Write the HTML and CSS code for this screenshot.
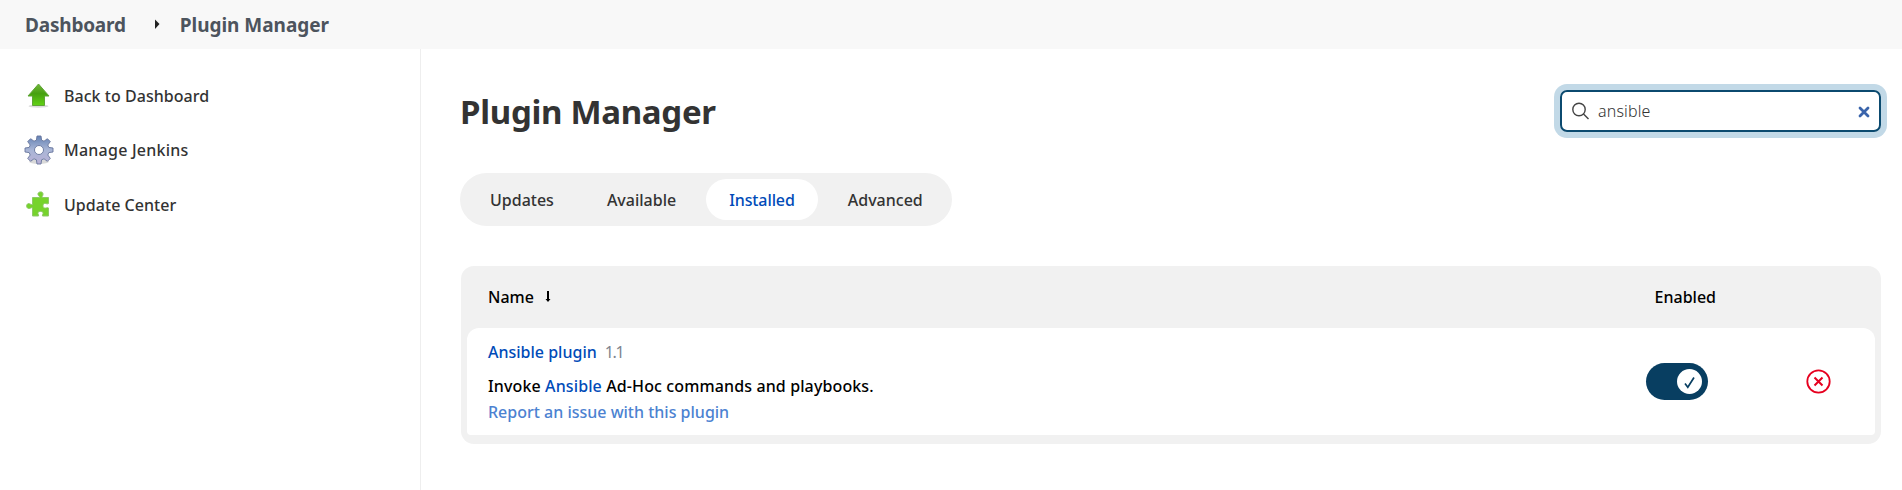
FILE: index.html
```html
<!DOCTYPE html>
<html lang="en">
<head>
<meta charset="utf-8">
<title>Plugin Manager</title>
<link rel="stylesheet" href="styles.css">
</head>
<body>
<nav class="breadcrumbs">
  <a class="crumb">Dashboard</a>
  <svg class="crumb-arrow" width="5" height="11" viewBox="0 0 5 11"><path d="M0 0.5L4.500 5L0 10Z" fill="#222"/></svg>
  <a class="crumb crumb-page">Plugin Manager</a>
</nav>
<div class="page">
  <aside class="side">
    <a class="task">
      <svg class="task-icon" viewBox="0 0 30 30">
        <defs><linearGradient id="up" x1="0" y1="0" x2="0" y2="1"><stop offset="0" stop-color="#74b63c"/><stop offset=".45" stop-color="#46a010"/><stop offset="1" stop-color="#62d215"/></linearGradient></defs>
        <ellipse cx="14.500" cy="25.200" rx="10" ry="1.600" fill="#000" opacity=".14"/>
        <path d="M14.500 3L25 15H20.500V24.500H8.500V15H4Z" fill="url(#up)" stroke="#5fa536" stroke-width="1" stroke-linejoin="round"/>
      </svg>
      <span>Back to Dashboard</span>
    </a>
    <a class="task task-manage">
      <svg class="task-icon" viewBox="0 0 30 30">
        <defs><linearGradient id="gear" x1="0" y1="0" x2="0" y2="1"><stop offset="0" stop-color="#6482b4"/><stop offset=".5" stop-color="#a9b6d6"/><stop offset="1" stop-color="#b9b0d6"/></linearGradient></defs>
        <ellipse cx="15" cy="26.500" rx="10" ry="2.400" fill="#000" opacity=".15"/>
        <path fill="url(#gear)" stroke="#66759c" stroke-width=".9" stroke-linejoin="round" fill-rule="evenodd" d="M13 1h4l.6 4.200 2.400 1L23.400 3.700 26.300 6.600 23.800 10l1 2.400L29 13v4l-4.200.6-1 2.400 2.500 3.400-2.900 2.900L20 23.800l-2.400 1L17 29h-4l-.6-4.200-2.400-1-3.400 2.500-2.900-2.900L6.200 20l-1-2.400L1 17v-4l4.200-.6 1-2.400-2.500-3.400 2.900-2.900L10 6.200l2.400-1ZM15 10.500a4.500 4.500 0 1 0 0 9a4.500 4.500 0 1 0 0-9Z"/>
      </svg>
      <span>Manage Jenkins</span>
    </a>
    <a class="task">
      <svg class="task-icon" viewBox="0 0 30 30">
        <path fill="#76d32c" stroke="#8ec968" stroke-width="1" d="M8.500 7.500H15.500C16 6 13.500 5.500 14 3.500C14.500 1.500 19 1 19 4C19 6 18 6 18 7.500H24.500V13.500C23 14.500 22 13 20.500 13.500C18.500 14 18.500 17.500 20.500 18C22 18.500 23 17 24.500 18V26H18.500C18 24.500 19.500 24 19 22.500C18.500 21 14.500 21 14 22.500C13.500 24 15 24.500 14.500 26H8.500V18C7 17 6 19 4.500 18.500C2 18 2 14 4.500 13.500C6 13.500 7 15 8.500 14.500Z"/>
      </svg>
      <span>Update Center</span>
    </a>
  </aside>
  <main class="main">
    <header class="head">
      <h1 class="title">Plugin Manager</h1>
      <div class="search">
        <svg class="search-icon" width="17" height="18" viewBox="0 0 17 18" fill="none" stroke="#444" stroke-width="1.400"><circle cx="7" cy="7.500" r="6.200"/><path d="M11.500 12L16.500 17"/></svg>
        <span class="query">ansible</span>
        <svg class="clear" width="12" height="12" viewBox="0 0 12 12"><path d="M2 2L10 10M10 2L2 10" stroke="#3a64ab" stroke-width="2.800" stroke-linecap="round"/></svg>
      </div>
    </header>
    <div class="tabs">
      <a class="tab">Updates</a><a class="tab">Available</a><a class="tab tab-on">Installed</a><a class="tab">Advanced</a>
    </div>
    <section class="table">
      <div class="thead">
        <span>Name</span>
        <svg class="sort" width="6" height="12" viewBox="0 0 6 12"><path d="M2 0H4V8H5.500L3 11L.5 8H2Z" fill="#000"/></svg>
        <span class="th-enabled">Enabled</span>
      </div>
      <div class="row">
        <div class="info">
          <div class="name"><a class="link">Ansible plugin</a><span class="version">1.1</span></div>
          <div class="desc">Invoke <a class="link">Ansible</a> Ad-Hoc commands and playbooks.</div>
          <a class="report">Report an issue with this plugin</a>
        </div>
        <div class="toggle"><span class="knob"><svg class="check" width="11" height="13" viewBox="0 0 11 13"><path d="M1 7.500L3.800 11.200L10 1.500" fill="none" stroke="#083e61" stroke-width="1.700"/></svg></span></div>
        <svg class="remove" width="25" height="25" viewBox="0 0 25 25" fill="none" stroke="#e6001f"><circle cx="12.500" cy="12.500" r="11.200" stroke-width="1.800"/><path d="M8.500 8.500L16.500 16.500M16.500 8.500L8.500 16.500" stroke-width="2"/></svg>
      </div>
    </section>
  </main>
</div>
</body>
</html>
```
FILE: styles.css
```css
body { margin: 0; background: #fff; color: #333; font: 500 16px/22px "Noto Sans", "Open Sans", sans-serif; height: 490px; overflow: hidden; }
.breadcrumbs { height: 49px; background: #f8f8f8; display: flex; align-items: center; padding: 1px 0 0 25px; box-sizing: border-box; }
.crumb { font-size: 19px; font-weight: 700; letter-spacing: -.2px; color: #4d545d; }
.crumb-page { letter-spacing: -.03px; }
.crumb-arrow { margin: 0 20px 2px 29px; }
.page { display: flex; height: 441px; }
.side { width: 421px; border-right: 1px solid #eee; box-sizing: border-box; padding: 32px 0 0 25px; }
.task { display: flex; align-items: center; height: 30px; margin-bottom: 24px; letter-spacing: .04px; }
.task-manage { letter-spacing: .24px; margin-bottom: 25px; }
.task-icon { width: 30px; height: 30px; margin: 0 9px 0 -1px; }
.task span { margin-left: 1px; }
.main { flex: 1; padding: 41px 21px 0 39px; }
.head { display: flex; justify-content: space-between; height: 83px; }
.title { margin: -1px 0 0; font-size: 33px; line-height: 46px; letter-spacing: -.3px; }
.search { width: 321px; height: 42px; box-sizing: border-box; border: 2px solid #0b4a6f; border-radius: 7px; box-shadow: 0 0 0 6px #c2d9e7; display: flex; align-items: center; padding: 0 9px 0 11px; font-weight: 300; }
.query { flex: 1; margin-left: 8px; letter-spacing: .15px; }
.search-icon { margin-left: -1px; margin-right: 1px; }
.clear { margin-top: 2px; }
.tabs { display: inline-flex; gap: 7px; height: 53px; padding: 6px 6px 6px 7px; border-radius: 27px; background: #f1f1f1; box-sizing: border-box; }
.tab { padding: 0 23px; line-height: 42px; height: 41px; border-radius: 21px; }
.tab-on { background: #fff; color: #004bb8; letter-spacing: -.1px; }
.table { margin: 40px 0 0 1px; height: 178px; background: #f1f1f1; border-radius: 13px; padding: 0 6px; box-sizing: border-box; color: #000; }
.thead { height: 62px; display: flex; align-items: center; padding-left: 21px; }
.sort { margin-left: 11px; }
.th-enabled { margin-left: auto; margin-right: 159px; }
.row { height: 107px; background: #fff; border-radius: 12px 12px 4px 4px; display: flex; align-items: center; padding-left: 21px; }
.info { flex: 1; line-height: 26px; }
.name { margin-bottom: 8px; }
.desc { letter-spacing: .12px; }
.link { color: #004bb8; }
.report { display: block; color: #4c82d1; }
.version { color: #808590; font-weight: 400; margin-left: 8px; letter-spacing: -1.400px; }
.toggle { width: 62px; height: 37px; border-radius: 19px; background: #083e61; display: flex; align-items: center; justify-content: flex-end; padding-right: 6px; box-sizing: border-box; }
.knob { width: 25px; height: 25px; border-radius: 50%; background: #fff; display: grid; place-items: center; }
.check { display: block; margin-top: 1px; }
.remove { margin: 0 44px 0 98px; }
```
